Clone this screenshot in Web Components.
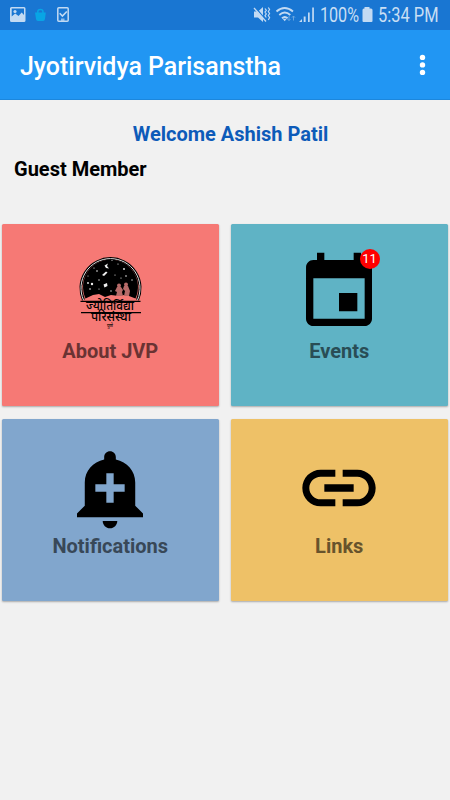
<!DOCTYPE html>
<html lang="en"><head><meta charset="utf-8"><title>Jyotirvidya Parisanstha</title>
<style>
html,body{margin:0;height:100%;background:#f1f1f1}
body{font-family:Roboto,"Noto Sans",sans-serif;overflow:hidden}
</style></head><body>
<jvp-app></jvp-app>
<script>
const define = (name, html) => {
  const t = document.createElement('template');
  t.innerHTML = html;
  customElements.define(name, class extends HTMLElement {
    constructor() { super(); this.attachShadow({mode: 'open'}).append(t.content.cloneNode(true)); }
  });
};

define('status-bar', `
<style>
:host{display:flex;height:30px;background:#1976d2;color:#c6ddf4}
svg{display:block;width:450px;height:30px}
text{font-family:Roboto,sans-serif;font-size:19.5px;fill:#c9dff4}
</style>
<svg viewBox="0 0 450 30" fill="#c2daf3">
  <path fill-rule="evenodd" d="M11.500 7h12.500a1.500 1.500 0 0 1 1.500 1.500v12a1.500 1.500 0 0 1-1.500 1.500H11.500a1.500 1.500 0 0 1-1.500-1.500v-12A1.500 1.500 0 0 1 11.500 7zM11.700 8.500v8l3.500-3 3.300 2.500 3.200-3.500 2.300 2.500V8.500z"/>
  <circle cx="15" cy="11.500" r="1.600"/>
  <path fill="#08a5e5" d="M35 12.500h10.800l-.8 6.500q-.3 2-2 2h-5q-1.700 0-2-2z"/>
  <path fill="none" stroke="#08a5e5" stroke-width="1.500" d="M37.800 13v-1.200a2.600 2.200 0 0 1 5.200 0v1.200"/>
  <rect x="57.800" y="7.800" width="10.400" height="13.400" rx="1" fill="none" stroke="#c2daf3" stroke-width="1.500"/>
  <path d="M59.700 13.300l2.700 2.700 4.400-4.500" fill="none" stroke="#c2daf3" stroke-width="1.600"/>
  <path d="M61 18.500h3.500v2.500h-3.500z" opacity=".7"/>
  <path d="M254 11.500h4l5-4.500v15l-5-4.500h-4z"/>
  <path d="M255 7l12 14.500" stroke="#1976d2" stroke-width="1.300"/>
  <path d="M254 8l12 13.500" fill="none" stroke="#c2daf3" stroke-width="1.300"/>
  <path d="M265 8.500l1.300 1.800-1.300 1.800 1.300 1.800-1.300 1.800 1.300 1.800M268.300 7.500l1.300 2-1.300 2 1.300 2-1.300 2 1.300 2-1.300 2.500" fill="none" stroke="#c2daf3" stroke-width="1.200"/>
  <g fill="none" stroke="#c2daf3" stroke-width="1.900"><path d="M276.500 11.500q8-7 16.500 0M279.300 14.900q5.500-4.600 11 0M282 18.200q2.800-2.600 5.600 0"/></g>
  <path d="M282.700 18.700h4l-2 2.500z"/>
  <path d="M289 16v4.500m-1.500-1.500l1.500 1.600 1.500-1.600M293.500 20.500V16m-1.500 1.600l1.500-1.600 1.500 1.600" fill="none" stroke="#69a6df" stroke-width="1"/>
  <path d="M299 22l3-3v3zM303.700 16.500h1.900V22h-1.900zM308 12.500h1.700V22H308zM312.200 7.500h1.700V22h-1.700z"/>
  <path d="M364.500 8.500v-1.500h5v1.500h1.500q1.500 0 1.500 1.500v11q0 1-1 1h-8q-1 0-1-1V10q0-1.500 1.500-1.500z"/>
  <text x="320" y="22" textLength="39" lengthAdjust="spacingAndGlyphs">100%</text>
  <text x="378" y="22" textLength="60.500" lengthAdjust="spacingAndGlyphs">5:34 PM</text>
</svg>`);

define('app-bar', `
<style>
:host{display:flex;align-items:center;justify-content:space-between;height:70px;box-sizing:border-box;
padding:3px 22px 0 20px;background:#2196f3;color:#fff;border-bottom:1px solid #1c87dd;font-size:25px;font-weight:500;letter-spacing:-.04px;white-space:nowrap}
svg{display:block;width:12px;height:24px}
</style>
<slot></slot>
<svg viewBox="0 0 12 24" fill="#fff"><circle cx="6.500" cy="3.400" r="2.700"/><circle cx="6.500" cy="10.900" r="2.700"/><circle cx="6.500" cy="18.400" r="2.700"/></svg>`);

define('welcome-panel', `
<style>
:host{display:flex;flex-direction:column;height:124px;box-sizing:border-box;padding-top:22px;font-size:20px;font-weight:700;line-height:24px;white-space:nowrap}
.hello{padding-left:11px;text-align:center;color:#0d5bb9}
.role{padding:11px 14px 0;color:#000}
</style>
<div class="hello"><slot name="hello"></slot></div>
<div class="role"><slot name="role"></slot></div>`);

define('menu-tile', `
<style>
:host{display:flex;flex-direction:column;align-items:center;position:relative;box-sizing:border-box;height:182px;padding-top:24.500px;
background:var(--tile);border-radius:1.500px;box-shadow:0 1px 2px rgba(0,0,0,.3);font-size:20px;font-weight:700;color:var(--ink)}
.label{margin-top:2px;line-height:24px;white-space:nowrap}
</style>
<slot name="icon"></slot><div class="label"><slot></slot></div><slot name="badge"></slot>`);

define('count-badge', `
<style>
:host{position:absolute;left:128.500px;top:25px;width:20px;height:20px;border-radius:50%;background:#f00;color:#fff;
font-size:13px;font-weight:400;line-height:20px;text-align:center}
</style><slot></slot>`);

const icon = (name, body) => define(name, `<style>:host{display:block;width:88px;height:88px}svg{display:block;width:88px;height:88px;overflow:visible}</style>${body}`);
icon('icon-event', `<svg viewBox="0 0 24 24"><path d="M17 12h-5v5h5v-5zM16 1v2H8V1H6v2H5c-1.110 0-1.990.9-1.990 2L3 19c0 1.100.89 2 2 2h14c1.100 0 2-.9 2-2V5c0-1.100-.9-2-2-2h-1V1h-2zm3 18H5V8h14v11z"/></svg>`);
icon('icon-bell', `<svg viewBox="0 0 24 24"><path d="M10.010 21.010c0 1.100.89 1.990 1.990 1.990s1.990-.89 1.990-1.990h-3.980zm8.870-4.190V10.500c0-3.250-2.250-5.650-5.290-6.300v-.61C13.590 2.710 12.880 2 12 2s-1.590.71-1.590 1.590v.61C7.370 4.850 5.120 7.250 5.120 10.500v6.320L3 18.940V20h18v-1.060l-2.120-2.120zM16 13.010h-3v3h-2v-3H8V11h3V8h2v3h3v2.010z"/></svg>`);
icon('icon-link', `<svg viewBox="0 0 24 24"><path d="M3.900 12c0-1.710 1.390-3.100 3.100-3.100h4V7H7c-2.760 0-5 2.240-5 5s2.240 5 5 5h4v-1.900H7c-1.710 0-3.100-1.390-3.100-3.100zM8 13h8v-2H8v2zm9-6h-4v1.900h4c1.710 0 3.100 1.390 3.100 3.100s-1.390 3.100-3.100 3.100h-4V17h4c2.760 0 5-2.240 5-5s-2.240-5-5-5z"/></svg>`);
icon('icon-jvp', `<svg viewBox="66 249 88 88">
  <path d="M83.500 300A29.500 29.500 0 1 1 137.500 300" fill="none" stroke="#000" stroke-width="3"/>
  <path d="M83.500 300A29.500 29.500 0 1 1 137.500 300" fill="none" stroke="#ddd" stroke-width="1"/>
  <path d="M85.500 298.500A27.500 27.500 0 1 1 135.500 298.500L129 296l-5-1-5 1-8-1-6 2-6-3-6 1z"/>
  <g fill="#eee">
    <path d="M104.500 265.500l3.500-2-1 2.500 2 2.500-3-.5zM102 275l4-3.500 1.500 1-3.500 3.500zM103.500 284.500l3.500-1.500.5 3-3 1.500z"/>
    <circle cx="97" cy="271" r=".8"/><circle cx="99" cy="280" r=".7"/><circle cx="88" cy="283" r=".9"/><circle cx="92" cy="284" r="1.200"/><circle cx="90" cy="289" r=".8"/><circle cx="94" cy="268" r=".6"/><circle cx="118" cy="264" r=".6"/><circle cx="124" cy="269" r=".9"/><circle cx="126" cy="276" r=".8"/><circle cx="115" cy="275" r=".6"/><circle cx="121" cy="278" r=".6"/><circle cx="132" cy="280" r=".7"/><circle cx="111" cy="291" r=".7"/><circle cx="99" cy="289" r=".6"/><circle cx="112" cy="260.500" r=".5"/><circle cx="88" cy="276" r=".5"/>
  </g>
  <g fill="#b66a68"><circle cx="119" cy="285.500" r="2"/><path d="M117 287l4 0 2 3-1 2 1 4h-7l1-4-2-1z"/><circle cx="126" cy="284.500" r="2"/><path d="M124 286h4l2 5-1 5h-5l1-5-2-2z"/></g>
  <path d="M80.500 301.300h60M81 312.700h60" stroke="#000" stroke-width="1.200"/>
  <g font-family="'Noto Sans','Noto Sans Devanagari',sans-serif" font-weight="500" font-size="12">
    <text x="86" y="309.600" textLength="48" lengthAdjust="spacingAndGlyphs">ज्योतिर्विद्या</text>
    <text x="91" y="321" textLength="40" lengthAdjust="spacingAndGlyphs">परिसंस्था</text>
    <text x="107" y="326.500" font-size="4" textLength="6" lengthAdjust="spacingAndGlyphs">पुणे</text>
  </g></svg>`);

define('jvp-app', `
<style>
:host{display:flex;flex-direction:column;width:450px;height:800px;background:#f1f1f1}
main{display:grid;grid-template-columns:216.500px 216.500px;gap:13px 12.500px;padding-left:2px}
</style>
<status-bar></status-bar>
<app-bar>Jyotirvidya Parisanstha</app-bar>
<welcome-panel><span slot="hello">Welcome Ashish Patil</span><span slot="role">Guest Member</span></welcome-panel>
<main>
  <menu-tile style="--tile:#f67975;--ink:#6a3333"><icon-jvp slot="icon"></icon-jvp>About JVP</menu-tile>
  <menu-tile style="--tile:#5fb3c5;--ink:#294d55"><icon-event slot="icon"></icon-event>Events<count-badge slot="badge">11</count-badge></menu-tile>
  <menu-tile style="--tile:#81a6cd;--ink:#384858"><icon-bell slot="icon"></icon-bell>Notifications</menu-tile>
  <menu-tile style="--tile:#eec167;--ink:#67532c"><icon-link slot="icon"></icon-link>Links</menu-tile>
</main>`);
</script></body></html>
